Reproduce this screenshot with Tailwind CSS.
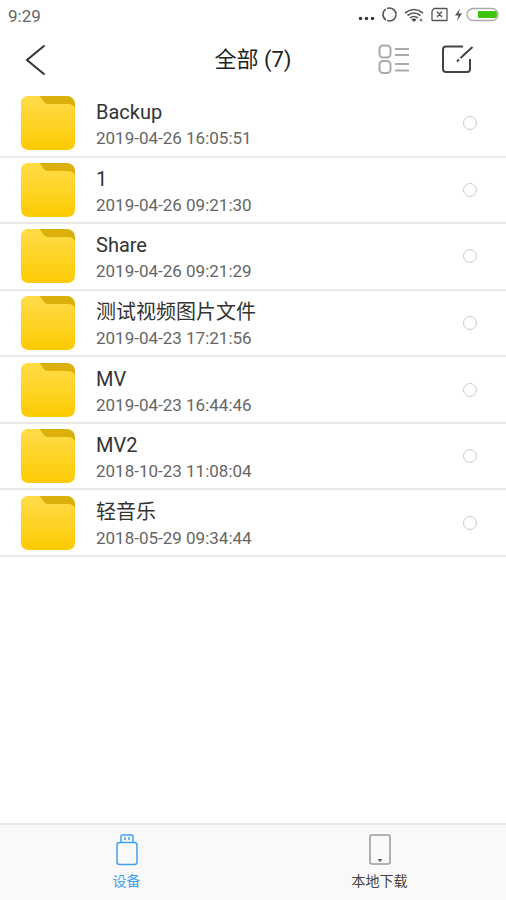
<!DOCTYPE html>
<html lang="zh-CN">

<head>
  <meta charset="UTF-8">
  <meta name="viewport" content="width=device-width, initial-scale=1.0">
  <title>全部文件</title>
  <script src="https://cdn.jsdelivr.net/npm/@tailwindcss/browser@4"></script>
</head>

<body class="bg-white font-[Roboto,'Noto_Sans_CJK_SC',sans-serif] min-h-screen flex flex-col">
  <!-- Shared folder icon -->
  <svg class="w-0 h-0" aria-hidden="true">
    <defs>
      <linearGradient id="folderFill" x1="0" y1="0" x2="0" y2="1">
        <stop offset="0" stop-color="#ffdc4a" />
        <stop offset="1" stop-color="#fdcb02" />
      </linearGradient>
      <symbol id="folder" viewBox="0 0 54 54">
        <rect width="54" height="50" rx="8" fill="#dcb00c" />
        <path d="M8 0H18C21 1 22 8 27 8H47Q52 8 54 12V46Q54 54 46 54H8Q0 54 0 46V8Q0 0 8 0Z" fill="url(#folderFill)" />
      </symbol>
    </defs>
  </svg>

  <!-- Status bar -->
  <div class="h-7 pl-2 pr-1 pt-1 flex items-center justify-between text-[#666]">
    <span class="text-[17px] leading-6">9:29</span>
    <svg class="w-37 h-6" viewBox="0 0 148 24" fill="none" stroke="#555" stroke-width="1.3">
      <g fill="#333" stroke="none">
        <circle cx="6.500" cy="14.5" r="1.7" />
        <circle cx="12.500" cy="14.5" r="1.7" />
        <circle cx="18.500" cy="14.5" r="1.7" />
      </g>
      <circle cx="35.500" cy="10.500" r="6.5" stroke-width="1.600" stroke-dasharray="12.400 1.200" />
      <g transform="translate(60 17)">
        <path d="M-9 -8Q0 -15 9 -8M-6.500 -5.500Q0 -10.500 6.500 -5.500M-4 -3Q0 -6 4 -3" stroke-width="1.6" />
        <path d="M-2.500 -1.500Q0 -3.500 2.500 -1.500L0 1Z" fill="#444" stroke="none" />
        <circle cx="7" cy="-1" r="1.500" fill="#888" stroke="none" />
      </g>
      <path d="M80 4.500H92.500Q93 4.500 93 5V16Q93 16.500 92.500 16.500H78.500Q78 16.500 78 16V7ZM83 7.500L88 13M88 7.500L83 13" />
      <path d="M106 4.500L101 11.500H104.500L103 17L108 9.500H104.500Z" fill="#555" stroke="none" />
      <rect x="113" y="4.500" width="31" height="12" rx="6" stroke="#aaa" />
      <path d="M124 7H141Q143 7 143 10.500T141 14H124Z" fill="#3fc40c" stroke="none" />
    </svg>
  </div>

  <!-- Header -->
  <header class="h-[63px] px-6 grid grid-cols-[1fr_auto_1fr] items-center">
    <button type="button" aria-label="返回" class="w-6 h-9">
      <svg class="w-6 h-9" viewBox="0 0 24 36" fill="none" stroke="#333" stroke-width="2">
        <path d="M20.500 3.500L3 18L20.500 32.500" />
      </svg>
    </button>
    <h1 class="text-[22px] leading-8 text-[#222]">全部 (7)</h1>
    <div class="flex justify-end gap-8 pr-2">
      <button type="button" aria-label="列表视图">
        <svg class="w-8 h-8" viewBox="0 0 32 32" fill="none" stroke="#aaa" stroke-width="2">
          <rect x="1.500" y="1.500" width="11" height="12" rx="3.500" />
          <rect x="1.500" y="17" width="11" height="12" rx="3.500" />
          <path d="M17 5H31M17 11H31M17 20H31M17 26.500H31" />
        </svg>
      </button>
      <button type="button" aria-label="编辑">
        <svg class="w-8 h-8" viewBox="0 0 32 32" fill="none" stroke="#444" stroke-width="2">
          <path d="M21 2.500H4Q1 2.500 1 5.500V25Q1 28 4 28H25Q28 28 28 25V15" />
          <path d="M18.500 14L30.500 3M15 17.500L17 15.500" />
        </svg>
      </button>
    </div>
  </header>

  <!-- File list -->
  <main class="flex-1">
    <ul id="fileList" class="grid auto-rows-fr min-h-[466px]"></ul>
  </main>

  <!-- Bottom tabs -->
  <nav class="h-[77px] border-t-2 border-[#e8e8e8] bg-[#f9f9f9] grid grid-cols-2">
    <a href="#device" class="flex flex-col items-center pt-2 text-[#459ff0]">
      <svg class="w-8 h-9" viewBox="0 0 32 36" fill="none" stroke="currentColor" stroke-width="1.500">
        <path d="M10 9V3Q10 2 11 2H21Q22 2 22 3V9" />
        <path d="M14 4V7M18 4V7" />
        <rect x="6" y="9.500" width="20" height="22" rx="2.500" />
      </svg>
      <span class="text-sm leading-6">设备</span>
    </a>
    <a href="#downloads" class="flex flex-col items-center pt-2 text-[#444]">
      <svg class="w-8 h-9" viewBox="0 0 32 36" fill="none" stroke="#999" stroke-width="1.500">
        <rect x="6" y="2" width="20" height="29" rx="2" />
        <path d="M14.500 26.500H17.500L16 28.500Z" fill="#555" stroke="#555" stroke-width="1" />
      </svg>
      <span class="text-sm leading-6">本地下载</span>
    </a>
  </nav>

  <script>
    const files = [
      { name: "Backup", date: "2019-04-26 16:05:51" },
      { name: "1", date: "2019-04-26 09:21:30" },
      { name: "Share", date: "2019-04-26 09:21:29" },
      { name: "测试视频图片文件", date: "2019-04-23 17:21:56" },
      { name: "MV", date: "2019-04-23 16:44:46" },
      { name: "MV2", date: "2018-10-23 11:08:04" },
      { name: "轻音乐", date: "2018-05-29 09:34:44" },
    ];

    document.getElementById("fileList").innerHTML = files.map((file, i) => `
      <li class="flex items-center pl-[21px] pr-[29px] border-b-2 border-[#e9e9e9]">
        <svg class="w-[54px] h-[54px] shrink-0"><use href="#folder" /></svg>
        <label for="file${i}" class="flex-1 pl-[21px] pt-0.5">
          <span class="block text-xl leading-7 text-[#333]">${file.name}</span>
          <span class="block text-[17px] leading-6 text-[#666]">${file.date}</span>
        </label>
        <input type="checkbox" id="file${i}" class="appearance-none w-[14px] h-[14px] rounded-full border border-[#ccc] checked:bg-[#459ff0]">
      </li>
    `).join("");
  </script>
</body>

</html>
